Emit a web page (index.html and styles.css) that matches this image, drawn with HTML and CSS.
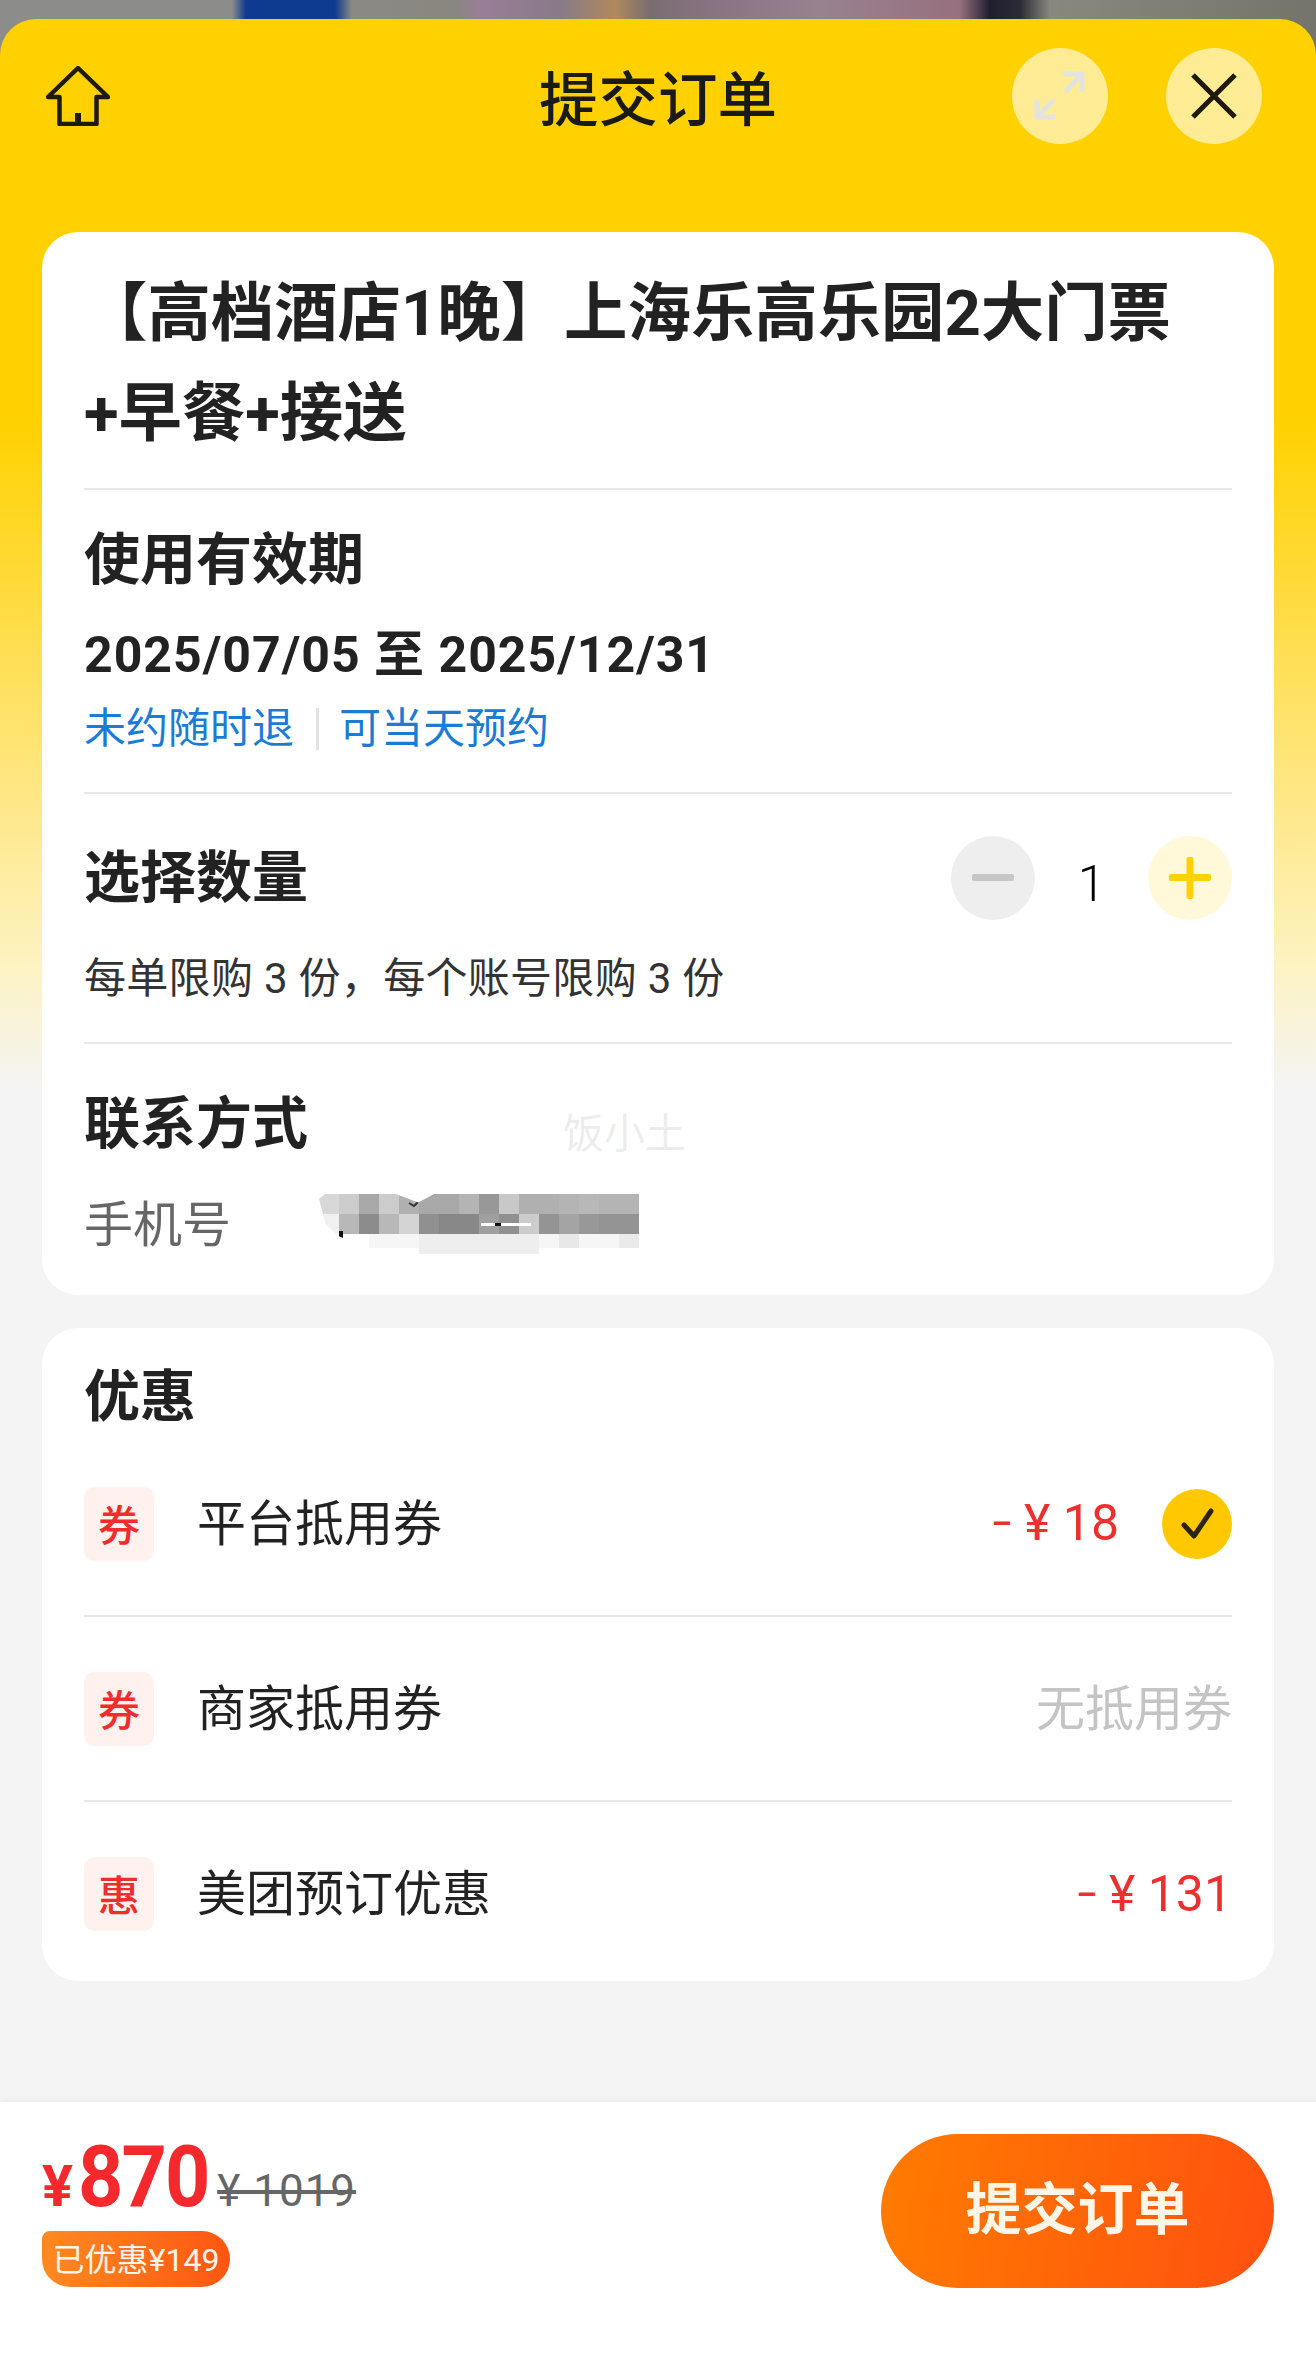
FILE: index.html
```html
<!DOCTYPE html>
<html lang="zh-CN">

<head>
    <meta charset="UTF-8">
    <meta name="viewport" content="width=device-width, initial-scale=1.0">
    <title>提交订单</title>
    <link rel="stylesheet" href="styles.css">
</head>

<body>
    <div class="backdrop"></div>

    <div class="sheet">
        <header class="topbar">
            <svg class="home-icon" viewBox="0 0 64 60" width="64" height="60">
                <path d="M32 2 L2 31 H13.5 V58 H50.5 V31 H62 Z" fill="none" stroke="#1e1a10" stroke-width="4.500" stroke-linejoin="round"/>
                <rect x="29" y="47" width="6" height="11" fill="#1e1a10"/>
            </svg>
            <h1 class="page-title">提交订单</h1>
            <div class="topbar-actions">
                <button class="round-btn" type="button">
                    <svg viewBox="0 0 96 96" width="96" height="96" fill="none" stroke="#e3e3df" stroke-width="5">
                        <path d="M51 26 H70 V44 M70 26 L53 44"/>
                        <path d="M25 52 V69 H43 M25 69 L42 52"/>
                    </svg>
                </button>
                <button class="round-btn" type="button">
                    <svg viewBox="0 0 96 96" width="96" height="96" fill="none" stroke="#1e1a10" stroke-width="5">
                        <path d="M27 27 L69 69 M69 27 L27 69"/>
                    </svg>
                </button>
            </div>
        </header>

        <main class="content">
            <section class="card">
                <div class="block block-title">
                    <h2 class="product-name">【高档酒店1晚】上海乐高乐园2大门票<br>+早餐+接送</h2>
                </div>

                <div class="block block-validity">
                    <h3 class="block-heading">使用有效期</h3>
                    <p class="date-range">2025/07/05 至 2025/12/31</p>
                    <p class="tags"><span>未约随时退</span><i class="tag-sep"></i><span>可当天预约</span></p>
                </div>

                <div class="block block-qty">
                    <div class="qty-row">
                        <h3 class="block-heading">选择数量</h3>
                        <div class="stepper">
                            <svg viewBox="0 0 84 84" width="84" height="84">
                                <circle cx="42" cy="42" r="42" fill="#eeeeee"/>
                                <rect x="21" y="38" width="42" height="7" rx="2" fill="#c6c6c6"/>
                            </svg>
                            <span class="qty-value">1</span>
                            <svg viewBox="0 0 84 84" width="84" height="84">
                                <circle cx="42" cy="42" r="42" fill="#fff8d9"/>
                                <rect x="21" y="38" width="42" height="7" rx="2" fill="#ffd100"/>
                                <rect x="38.500" y="21" width="7" height="42" rx="2" fill="#ffd100"/>
                            </svg>
                        </div>
                    </div>
                    <p class="limit-note">每单限购 3 份，每个账号限购 3 份</p>
                </div>

                <div class="block block-contact">
                    <h3 class="block-heading">联系方式</h3>
                    <span class="watermark">饭小土</span>
                    <div class="phone-row">
                        <span class="phone-label">手机号</span>
                        <!-- number is pixelated in the original -->
                        <svg class="mosaic" viewBox="0 0 320 60" width="320" height="60">
                            <g id="r1">
                                <rect x="0" y="0" width="20" height="20" fill="#d8d8d8"/>
                                <rect x="20" y="0" width="20" height="20" fill="#cccccc"/>
                                <rect x="40" y="0" width="20" height="20" fill="#a8a8a8"/>
                                <rect x="60" y="0" width="20" height="20" fill="#cccccc"/>
                                <rect x="80" y="0" width="20" height="20" fill="#b0b0b0"/>
                                <rect x="100" y="0" width="20" height="20" fill="#a8a8a8"/>
                                <rect x="120" y="0" width="20" height="20" fill="#a8a8a8"/>
                                <rect x="140" y="0" width="20" height="20" fill="#b4b4b4"/>
                                <rect x="160" y="0" width="20" height="20" fill="#989898"/>
                                <rect x="180" y="0" width="20" height="20" fill="#c8c8c8"/>
                                <rect x="200" y="0" width="20" height="20" fill="#b0b0b0"/>
                                <rect x="220" y="0" width="20" height="20" fill="#b0b0b0"/>
                                <rect x="240" y="0" width="20" height="20" fill="#b4b4b4"/>
                                <rect x="260" y="0" width="20" height="20" fill="#b8b8b8"/>
                                <rect x="280" y="0" width="20" height="20" fill="#b4b4b4"/>
                                <rect x="300" y="0" width="20" height="20" fill="#b4b4b4"/>
                            </g>
                            <g id="r2">
                                <rect x="0" y="20" width="20" height="20" fill="#f0f0f0"/>
                                <rect x="20" y="20" width="20" height="20" fill="#b8b8b8"/>
                                <rect x="40" y="20" width="20" height="20" fill="#8c8c8c"/>
                                <rect x="60" y="20" width="20" height="20" fill="#b8b8b8"/>
                                <rect x="80" y="20" width="20" height="20" fill="#d4d4d4"/>
                                <rect x="100" y="20" width="20" height="20" fill="#909090"/>
                                <rect x="120" y="20" width="20" height="20" fill="#888888"/>
                                <rect x="140" y="20" width="20" height="20" fill="#888888"/>
                                <rect x="160" y="20" width="20" height="20" fill="#a0a0a0"/>
                                <rect x="180" y="20" width="20" height="20" fill="#909090"/>
                                <rect x="200" y="20" width="20" height="20" fill="#cccccc"/>
                                <rect x="220" y="20" width="20" height="20" fill="#949494"/>
                                <rect x="240" y="20" width="20" height="20" fill="#a4a4a4"/>
                                <rect x="260" y="20" width="20" height="20" fill="#989898"/>
                                <rect x="280" y="20" width="20" height="20" fill="#949494"/>
                                <rect x="300" y="20" width="20" height="20" fill="#949494"/>
                            </g>
                            <g id="r3">
                                <rect x="50" y="40" width="270" height="14" fill="#f6f6f6"/>
                                <rect x="100" y="40" width="120" height="20" fill="#eeeeee"/>
                                <rect x="240" y="40" width="20" height="14" fill="#e8e8e8"/>
                                <rect x="300" y="40" width="20" height="14" fill="#eaeaea"/>
                            </g>
                            <rect x="162" y="29" width="50" height="3" fill="#ffffff"/>
                            <rect x="176" y="29" width="6" height="3" fill="#111111"/>
                            <rect x="20" y="37" width="4" height="7" fill="#111111"/>
                            <path d="M90 9 L95 12 L99 8" fill="none" stroke="#333333" stroke-width="2"/>
                        </svg>
                    </div>
                </div>
            </section>

            <section class="card">
                <h3 class="block-heading discount-heading">优惠</h3>
                <div class="discount-row">
                    <span class="discount-tag">券</span>
                    <span class="discount-name">平台抵用券</span>
                    <span class="discount-amount"><span class="minus">–</span> ¥ 18</span>
                    <svg class="check-icon" viewBox="0 0 70 70" width="70" height="70">
                        <circle cx="35" cy="35" r="35" fill="#ffc800"/>
                        <path d="M22 36 L32 47 L49 22" fill="none" stroke="#2a2410" stroke-width="5" stroke-linecap="round" stroke-linejoin="round"/>
                    </svg>
                </div>
                <div class="discount-row">
                    <span class="discount-tag">券</span>
                    <span class="discount-name">商家抵用券</span>
                    <span class="discount-none">无抵用券</span>
                </div>
                <div class="discount-row">
                    <span class="discount-tag">惠</span>
                    <span class="discount-name">美团预订优惠</span>
                    <span class="discount-amount"><span class="minus">–</span> ¥ 131</span>
                </div>
            </section>
        </main>

        <footer class="paybar">
            <div class="price-box">
                <div class="price-line">
                    <span class="price-yen">¥</span><span class="price-num">870</span>
                    <span class="price-old">¥ 1019</span>
                </div>
                <span class="saved-badge">已优惠¥149</span>
            </div>
            <button class="submit-btn" type="button">提交订单</button>
        </footer>
    </div>
</body>

</html>
```

FILE: styles.css
```css
* {
    box-sizing: border-box;
}

html,
body {
    margin: 0;
    padding: 0;
    height: 100%;
    overflow: hidden;
}

body {
    display: flex;
    flex-direction: column;
    font-family: Roboto, "Noto Sans CJK SC", sans-serif;
    color: #222222;
    background-color: #f4f4f4;
}

h1,
h2,
h3,
p {
    margin: 0;
}

/* blurred page behind the sheet */
.backdrop {
    height: 60px;
    margin-bottom: -41px;
    flex: none;
    background: linear-gradient(to right, #8c8c8a 0, #8c8c8a 232px, #0e3a90 246px, #0e3a90 335px, #8a8a84 352px, #8a8680 455px, #9a7e98 480px, #887a88 560px, #b08a5c 615px, #7a6c70 650px, #8a7484 720px, #988290 820px, #96707e 960px, #1e1e2e 990px, #2c2c36 1020px, #88887e 1050px, #74746a 1316px);
}

.sheet {
    flex: 1;
    display: flex;
    flex-direction: column;
    position: relative;
    border-radius: 36px 36px 0 0;
    background: linear-gradient(to bottom, #ffd100 0, #ffd100 400px, #ffe680 760px, #fdf3c4 950px, #f4f4f4 1070px);
}

.topbar {
    display: grid;
    grid-template-columns: 1fr auto 1fr;
    align-items: center;
    height: 213px;
    padding: 29px 54px 88px;
}

.home-icon {
    display: block;
    margin-left: -8px;
}

.page-title {
    margin-bottom: 2px;
    font-size: 59.500px;
    font-weight: 500;
    color: #1a1a1a;
}

.topbar-actions {
    display: flex;
    justify-content: flex-end;
    gap: 58px;
}

.round-btn {
    width: 96px;
    height: 96px;
    padding: 0;
    border: none;
    border-radius: 50%;
    background-color: rgba(255, 255, 255, 0.58);
}

.round-btn svg {
    display: block;
}

.content {
    flex: 1;
    display: flex;
    flex-direction: column;
    gap: 33px;
    padding: 0 42px;
}

.card {
    padding: 0 42px;
    border-radius: 36px;
    background-color: #ffffff;
}

.block {
    border-bottom: 2px solid #e8e8e8;
}

.block-title {
    padding: 31px 0 25px;
}

.product-name {
    font-size: 63.400px;
    font-weight: 700;
    line-height: 100px;
}

.block-heading {
    font-size: 56px;
    font-weight: 700;
    line-height: 76px;
}

.block-validity {
    padding: 32px 0 35px;
}

.date-range {
    margin-top: 27px;
    font-size: 50px;
    font-weight: 700;
    line-height: 60px;
    letter-spacing: 1px;
}

.tags {
    display: flex;
    align-items: center;
    margin-top: 16px;
    font-size: 42px;
    line-height: 56px;
    color: #1b7cd6;
}

.tag-sep {
    width: 3px;
    height: 42px;
    margin: 0 20px 0 22px;
    background-color: #e2e2e2;
}

.block-qty {
    padding: 42px 0 33px;
}

.qty-row {
    display: flex;
    justify-content: space-between;
    align-items: center;
    height: 84px;
}

.stepper {
    display: flex;
    align-items: center;
}

.stepper svg {
    display: block;
}

.qty-value {
    width: 113px;
    padding-top: 12px;
    font-size: 50px;
    font-weight: 300;
    text-align: center;
    color: #000000;
}

.limit-note {
    margin-top: 29px;
    font-size: 42px;
    line-height: 60px;
    letter-spacing: 0.3px;
    color: #333333;
}

.block-contact {
    position: relative;
    padding: 42px 0 38px;
    border-bottom: none;
}

.watermark {
    position: absolute;
    left: 479px;
    top: 62px;
    font-size: 41px;
    line-height: 56px;
    color: rgba(170, 170, 170, 0.22);
}

.phone-row {
    display: flex;
    align-items: center;
    margin-top: 29px;
    height: 66px;
}

.phone-label {
    width: 235px;
    margin-bottom: 7px;
    font-size: 49px;
    color: #666666;
}

.mosaic {
    display: block;
    clip-path: polygon(0 8%, 2% 0, 24% 0, 31% 14%, 36% 0, 100% 0, 100% 92%, 70% 100%, 20% 100%, 6% 70%, 2% 50%);
}

.discount-heading {
    padding-top: 34px;
    line-height: 70px;
}

.discount-row {
    display: flex;
    align-items: center;
    height: 185px;
    border-bottom: 2px solid #e8e8e8;
}

.discount-row:last-child {
    height: 179px;
    padding-top: 5px;
    border-bottom: none;
}

.discount-tag {
    flex: none;
    width: 70px;
    height: 74px;
    border-radius: 10px;
    background-color: #fff1ed;
    color: #f02d2d;
    font-size: 42px;
    font-weight: 500;
    line-height: 80px;
    text-align: center;
}

.discount-name {
    flex: 1;
    margin-left: 43px;
    margin-bottom: 9px;
    font-size: 49px;
    color: #222222;
}

.discount-amount {
    margin-bottom: 1px;
    font-size: 50px;
    color: #ee2f2f;
}

.minus {
    font-size: 32px;
    font-weight: 700;
    vertical-align: 6px;
}

.check-icon {
    display: block;
    margin-left: 43px;
}

.discount-none {
    margin-bottom: 9px;
    font-size: 49px;
    color: #c4c4c4;
}

.paybar {
    display: flex;
    justify-content: space-between;
    align-items: flex-start;
    height: 266px;
    padding: 31px 42px 0;
    background-color: #ffffff;
    box-shadow: 0 -2px 8px rgba(0, 0, 0, 0.04);
}

.price-line {
    display: flex;
    align-items: baseline;
    height: 88px;
    color: #f5282d;
}

.price-yen {
    font-size: 58px;
    font-weight: 700;
    margin-right: 5px;
}

.price-num {
    display: inline-block;
    margin-right: -13px;
    font-size: 86px;
    font-weight: 700;
    line-height: 88px;
    letter-spacing: -2px;
    transform: scaleX(0.92);
    transform-origin: left center;
}

.price-old {
    margin-left: 10px;
    font-size: 44px;
    letter-spacing: 1px;
    color: #666666;
    text-decoration: line-through;
    text-decoration-thickness: 4px;
}

.saved-badge {
    display: block;
    width: 188px;
    height: 56px;
    margin-top: 10px;
    border-radius: 8px 28px 28px 28px;
    background: linear-gradient(to right, #ff8a20, #ff5612);
    color: #fff6e8;
    font-size: 32px;
    line-height: 58px;
    text-align: center;
    white-space: nowrap;
}

.submit-btn {
    width: 393px;
    height: 154px;
    margin-top: 1px;
    padding: 0 0 14px;
    border: none;
    border-radius: 77px;
    background: linear-gradient(100deg, #ff7c00, #ff5010);
    color: #fff6e8;
    font-family: inherit;
    font-size: 56px;
    font-weight: 700;
}
```
